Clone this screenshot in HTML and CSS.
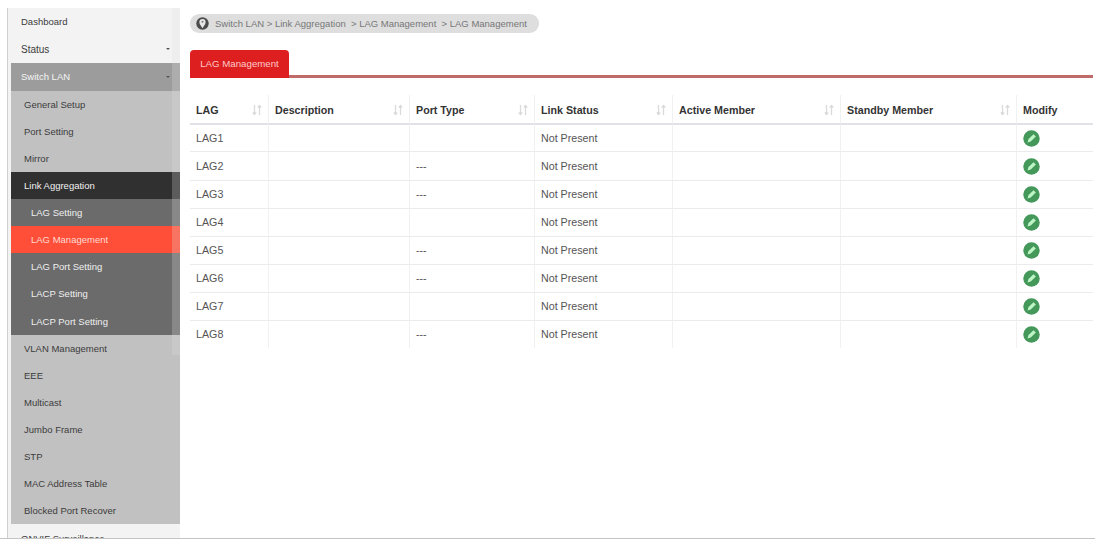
FILE: index.html
```html
<!DOCTYPE html>
<html lang="en">
    <head>
        <meta charset="UTF-8" />
        <meta name="viewport" content="width=device-width, initial-scale=1.0" />
        <title>LAG Management</title>
        <link rel="stylesheet" href="styles.css">
    </head>
    <body>
        <svg class="defs" width="0" height="0">
            <symbol id="sort" viewBox="0 0 10 12">
                <path d="M2.5 1v9M.8 8.5l1.7 2 1.7-2M7.5 11V2M5.8 3.5l1.7-2 1.7 2" fill="none" stroke="#dadada" stroke-width="1.3"/>
            </symbol>
            <symbol id="edit" viewBox="0 0 18 18">
                <circle cx="9" cy="9" r="8.7" fill="#43985a"/>
                <path d="M4.8 13.2l1-3.6L11.2 4.4l2.4 2.4-5.4 5.4z" fill="#bdf5c4"/>
            </symbol>
        </svg>
        <div class="page">
            <nav class="sidebar">
                <ul class="menu">
                    <li class="top"><span>Dashboard</span></li>
                    <li class="top"><span class="status">Status</span><i class="arrow"></i></li>
                    <li class="top open"><span>Switch LAN</span><i class="arrow"></i></li>
                    <li><span>General Setup</span></li>
                    <li><span>Port Setting</span></li>
                    <li><span>Mirror</span></li>
                    <li class="selected"><span>Link Aggregation</span></li>
                    <li class="sub"><span>LAG Setting</span></li>
                    <li class="sub active"><span>LAG Management</span></li>
                    <li class="sub"><span>LAG Port Setting</span></li>
                    <li class="sub"><span>LACP Setting</span></li>
                    <li class="sub"><span>LACP Port Setting</span></li>
                    <li><span>VLAN Management</span></li>
                    <li><span>EEE</span></li>
                    <li><span>Multicast</span></li>
                    <li><span>Jumbo Frame</span></li>
                    <li><span>STP</span></li>
                    <li><span>MAC Address Table</span></li>
                    <li><span>Blocked Port Recover</span></li>
                    <li class="top"><span>ONVIF Surveillance</span></li>
                </ul>
                <div class="scroll"></div>
            </nav>
            <main class="content">
                <div class="breadcrumb">
                    <svg width="13" height="13" viewBox="0 0 13 13">
                        <circle cx="6.5" cy="6.5" r="6.2" fill="#4c4c4c"/>
                        <path d="M6.5 11.2C4.6 8.5 3.4 6.9 3.4 5a3.1 3.1 0 0 1 6.2 0c0 1.9-1.2 3.5-3.1 6.2z" fill="#e8e8e8"/>
                        <circle cx="6.5" cy="4.8" r="1" fill="#777"/>
                    </svg>
                    <span>Switch LAN &gt; Link Aggregation &nbsp;&gt; LAG Management &nbsp;&gt; LAG Management</span>
                </div>
                <div class="tabs">
                    <div class="tab">LAG Management</div>
                </div>
                <table class="lag">
                    <colgroup>
                        <col class="c1"><col class="c2"><col class="c3"><col class="c4"><col class="c5"><col class="c6"><col class="c7">
                    </colgroup>
                    <thead>
                        <tr>
                            <th><div>LAG<svg><use href="#sort"/></svg></div></th>
                            <th><div>Description<svg><use href="#sort"/></svg></div></th>
                            <th><div>Port Type<svg><use href="#sort"/></svg></div></th>
                            <th><div>Link Status<svg><use href="#sort"/></svg></div></th>
                            <th><div>Active Member<svg><use href="#sort"/></svg></div></th>
                            <th><div>Standby Member<svg><use href="#sort"/></svg></div></th>
                            <th><div>Modify</div></th>
                        </tr>
                    </thead>
                    <tbody>
                        <tr><td>LAG1</td><td></td><td></td><td>Not Present</td><td></td><td></td><td><svg><use href="#edit"/></svg></td></tr>
                        <tr><td>LAG2</td><td></td><td>---</td><td>Not Present</td><td></td><td></td><td><svg><use href="#edit"/></svg></td></tr>
                        <tr><td>LAG3</td><td></td><td>---</td><td>Not Present</td><td></td><td></td><td><svg><use href="#edit"/></svg></td></tr>
                        <tr><td>LAG4</td><td></td><td></td><td>Not Present</td><td></td><td></td><td><svg><use href="#edit"/></svg></td></tr>
                        <tr><td>LAG5</td><td></td><td>---</td><td>Not Present</td><td></td><td></td><td><svg><use href="#edit"/></svg></td></tr>
                        <tr><td>LAG6</td><td></td><td>---</td><td>Not Present</td><td></td><td></td><td><svg><use href="#edit"/></svg></td></tr>
                        <tr><td>LAG7</td><td></td><td></td><td>Not Present</td><td></td><td></td><td><svg><use href="#edit"/></svg></td></tr>
                        <tr><td>LAG8</td><td></td><td>---</td><td>Not Present</td><td></td><td></td><td><svg><use href="#edit"/></svg></td></tr>
                    </tbody>
                </table>
            </main>
        </div>
    </body>
</html>
```

FILE: styles.css
```css
*{
    margin: 0;
    padding: 0;
    box-sizing: border-box;
}
body{
    background-color: #fff;
    font-family: "Liberation Sans", Arial, sans-serif;
    overflow: hidden;
}
.defs{
    display: block;
}
.page{
    display: flex;
    height: 539px;
    padding: 8px 2px 0 7px;
    overflow: hidden;
    border-bottom: 1px solid #c4c4c4;
}

/* menu */
.sidebar{
    position: relative;
    width: 173px;
    height: 530px;
    flex: none;
    padding-left: 3px;
    overflow: hidden;
    border-left: 1px solid #d0d0d0;
    background-color: #f3f3f3;
}
.menu{
    list-style: none;
    font-size: 9.5px;
    color: #3c3c3c;
}
.menu li{
    display: flex;
    align-items: center;
    justify-content: space-between;
    height: 27.1px;
    padding: 0 4px 0 13px;
    background-color: #c1c1c1;
    white-space: nowrap;
}
.menu .top{
    height: 27.6px;
    padding: 0 10px 0 10px;
    background-color: #f3f3f3;
}
.menu .status{
    font-size: 10px;
}
.menu .open{
    background-color: #9c9c9c;
    color: #f4f4f4;
}
.menu .selected{
    background-color: #303030;
    color: #f0f0f0;
}
.menu .sub{
    padding-left: 20px;
    background-color: #6b6b6b;
    color: #efefef;
}
.menu .active{
    background-color: #ff4f38;
    color: #ffd9d2;
}
.arrow{
    border: 2px solid transparent;
    border-top-color: #555;
    border-bottom: 0;
}
.scroll{
    position: absolute;
    top: 0;
    right: 0;
    width: 8px;
    height: 347px;
    background-color: rgba(225, 225, 225, .25);
}

/* content */
.content{
    flex: 1;
    padding: 6px 0 0 10px;
}
.breadcrumb{
    display: flex;
    align-items: center;
    width: 349px;
    height: 19px;
    padding-left: 6px;
    border-radius: 9px;
    background-color: #dedede;
    color: #777;
    font-size: 9.5px;
    white-space: nowrap;
}
.breadcrumb span{
    margin-left: 6px;
}
.tabs{
    display: flex;
    margin-top: 17px;
    border-bottom: 3px solid #c06a6a;
}
.tab{
    width: 99px;
    height: 28px;
    margin-bottom: -3px;
    border-radius: 4px 4px 0 0;
    background-color: #dd1f1f;
    color: #ffc9c9;
    font-size: 9.7px;
    line-height: 27px;
    text-align: center;
    white-space: nowrap;
}
.lag{
    width: 903px;
    margin-top: 17px;
    table-layout: fixed;
    border-collapse: separate;
    border-spacing: 0;
    font-size: 10.7px;
    color: #555;
}
.lag .c1{ width: 79px; }
.lag .c2{ width: 141px; }
.lag .c3{ width: 125px; }
.lag .c4{ width: 138px; }
.lag .c5{ width: 168px; }
.lag .c6{ width: 176px; }
.lag .c7{ width: 76px; }
.lag th,
.lag td{
    height: 28px;
    padding: 0 6px 1px;
    border-right: 1px solid #f1f1f1;
    border-bottom: 1px solid #ebebeb;
    text-align: left;
    vertical-align: middle;
    white-space: nowrap;
}
.lag th{
    height: 30px;
    padding: 2px 6px 0;
    border-bottom: 2px solid #e2e2e6;
    color: #333;
}
.lag th div{
    display: flex;
    align-items: center;
    justify-content: space-between;
}
.lag th:last-child,
.lag td:last-child{
    border-right: 0;
}
.lag td:last-child{
    padding-bottom: 0;
}
.lag tbody tr:first-child td{
    height: 27px;
}
.lag tbody tr:nth-child(2) td{
    height: 29px;
}
.lag tbody tr:last-child td{
    height: 27px;
    border-bottom: 0;
}
.lag th svg{
    width: 10px;
    height: 12px;
}
.lag td svg{
    display: block;
    width: 17px;
    height: 17px;
}
```
